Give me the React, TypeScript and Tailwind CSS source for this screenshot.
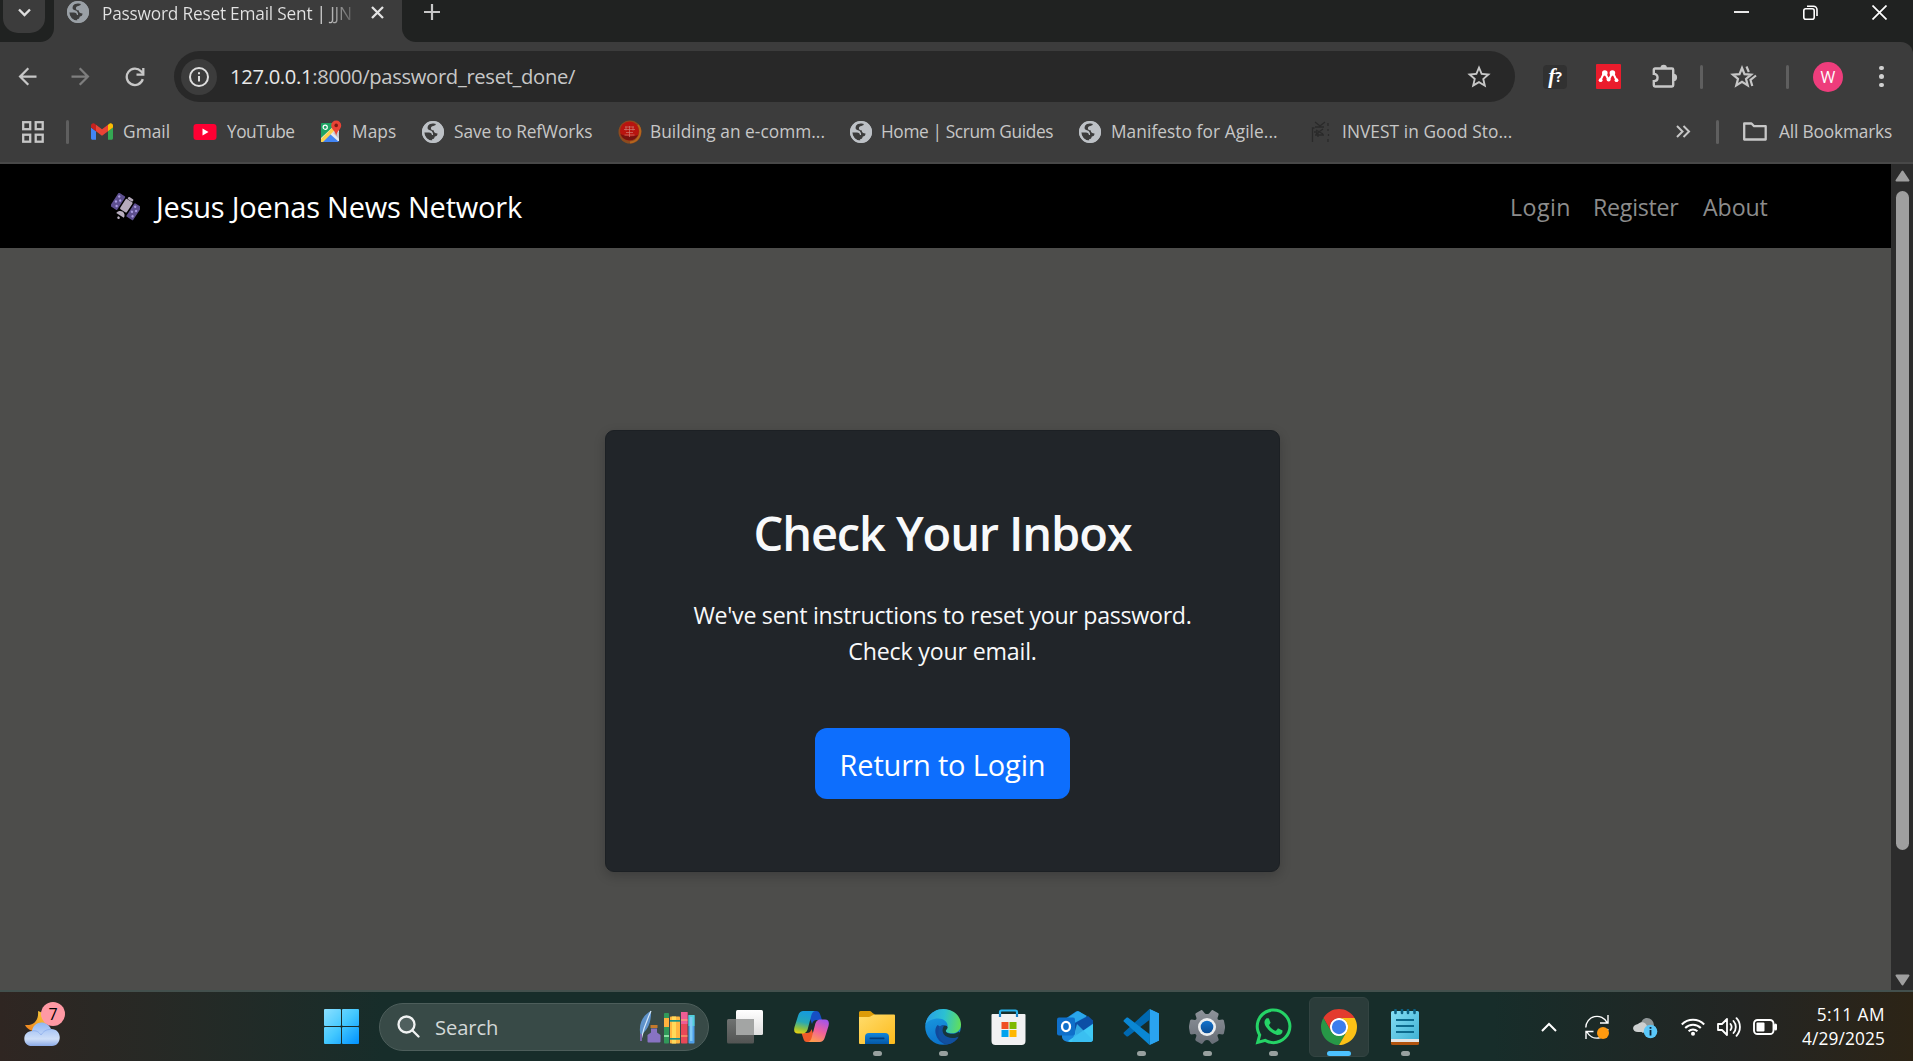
import React from 'react';
import { MdStarOutline, MdArrowBack, MdArrowForward } from 'react-icons/md';
import { FaWhatsapp } from 'react-icons/fa';

type IconProps = { className?: string };

const GmailIcon = () => (
  <svg className="h-[17px] w-[22px]" viewBox="52 42 88 66">
    <path fill="#4285f4" d="M58 108h14V74L52 59v43c0 3.32 2.69 6 6 6" />
    <path fill="#34a853" d="M120 108h14c3.32 0 6-2.69 6-6V59l-20 15" />
    <path fill="#fbbc04" d="M120 48v26l20-15v-8c0-7.42-8.47-11.65-14.4-7.2" />
    <path fill="#ea4335" d="M72 74V48l24 18 24-18v26L96 92" />
    <path fill="#c5221f" d="M52 51v8l20 15V48l-5.6-4.2c-5.94-4.45-14.4-.22-14.4 7.2" />
  </svg>
);

const YouTubeIcon = () => (
  <svg className="h-4 w-6" viewBox="0 0 24 16">
    <rect x="0.5" width="23" height="16" rx="3" fill="#ff0033" />
    <path d="M9.5 4.6v6.8l6-3.4z" fill="#fff" />
  </svg>
);

const MapsIcon = () => (
  <svg className="h-[23px] w-[22px]" viewBox="0 0 22 23">
    <path d="M2 3h11v11L1 22V4a1 1 0 0 1 1-1z" fill="#1ea362" />
    <path d="M1 18 15 5l4 4v12H1z" fill="#e8eaed" />
    <path d="M2 22l8-8 9 8z" fill="#4285f4" />
    <path d="M1 19 14 6l2 3L3 22H1z" fill="#fbd14b" />
    <path d="M13 13l6 6v-7l-3-2z" fill="#c6c9cf" />
    <circle cx="5.2" cy="7.2" r="2.1" fill="none" stroke="#fff" strokeWidth="1.2" />
    <path d="M16.2 0.5a5 5 0 0 0-5 5c0 4 4.2 5 5 10.5.8-5.500 5-6.500 5-10.500a5 5 0 0 0-5-5z" fill="#ea4335" />
    <circle cx="16.200" cy="5.400" r="1.800" fill="#7d1c14" />
  </svg>
);

const RedBadgeIcon = () => (
  <svg className="size-6" viewBox="0 0 24 24">
    <circle cx="12" cy="12" r="11.500" fill="#8c4a1e" />
    <path d="M20 5a11 11 0 0 1-8 17.500" fill="none" stroke="#b5651d" strokeWidth="2" />
    <circle cx="11.500" cy="11" r="9.500" fill="#b8140f" />
    <path d="M2.500 14a9.500 9.500 0 0 0 17.500 1c-4 2-12 2-17.500-1z" fill="#75130f" />
    <path d="M7 7h9M6 9.500h11M8 12.500h7M6.500 15h10M11.500 6v11M8 6.500v4M15 6.500v4" stroke="#cf7a70" strokeWidth="1" opacity="0.700" fill="none" />
  </svg>
);

const InvestIcon = () => (
  <svg className="h-[22px] w-[20px]" viewBox="0 0 20 22" fill="none" stroke="#2a2a2a" strokeWidth="1.300">
    <path d="M1.500 21V7h2M4 1l5 4 5-4M4 6h9M5 9l7 4M12 8l-7 5M4 14h9M7 11v5M17 2v3M17 8v2M17.500 13v2M17 18v3M3 11h3" />
  </svg>
);

const StarCollection = () => (
  <svg className="h-[27px] w-[30px]" viewBox="0 0 30 27" fill="none" stroke="#c7c7c7" strokeWidth="2.200" strokeLinejoin="miter">
    <path d="M13 5l2.500 6.200 6.600.500-5.100 4.200 1.700 6.500L13 18.800l-5.700 3.600L9 15.900l-5.100-4.200 6.600-.5z" />
    <path d="M17.500 3.500l2.300 5.500M27 12.500l-5.500 4.500 1.800 6" />
  </svg>
);

const PuzzleIcon = () => (
  <svg className="h-[27px] w-[27px]" viewBox="0 0 27 27">
    <path d="M4 6.500h17a1.200 1.200 0 0 1 1.200 1.200v15.600a1.200 1.200 0 0 1-1.200 1.200H4a1.200 1.200 0 0 1-1.200-1.200v-4.200c5 0 5-7.300 0-7.300V7.700A1.200 1.200 0 0 1 4 6.500z" fill="none" stroke="#c7c7c7" strokeWidth="2.400" />
    <path d="M9.500 6a3.200 3.200 0 0 1 6.400 0zM22.500 11.800a3.600 3.600 0 0 1 0 7.200z" fill="#c7c7c7" />
  </svg>
);

const MendeleyIcon = () => (
  <svg className="size-[25px]" viewBox="0 0 25 25">
    <rect width="25" height="25" rx="1" fill="#ea1c2c" />
    <circle cx="8.800" cy="9" r="2.800" fill="#fff" />
    <circle cx="16.400" cy="9" r="2.800" fill="#fff" />
    <path d="M4.600 16.200 7.500 10M12.600 16 9.500 10M12.600 16l3.200-6M20.500 16.200 17.500 10" fill="none" stroke="#fff" strokeWidth="2" />
    <circle cx="4.600" cy="16.200" r="1.900" fill="#fff" />
    <circle cx="12.600" cy="15.600" r="2" fill="#fff" />
    <circle cx="20.500" cy="16.200" r="1.900" fill="#fff" />
  </svg>
);

const SatelliteIcon = () => (
  <svg className="size-[29px]" viewBox="0 0 29 29">
    <g transform="rotate(33 14.500 14)">
      <rect x="1" y="5.500" width="8" height="16" rx="1" fill="#5d4f8f" />
      <rect x="20" y="5.500" width="8" height="16" rx="1" fill="#5d4f8f" />
      <g fill="#a99be0">
        <circle cx="3.500" cy="8.500" r="1.200" /><circle cx="6.500" cy="11.500" r="1.200" /><circle cx="3.500" cy="14.500" r="1.200" /><circle cx="6.500" cy="18" r="1.200" />
        <circle cx="22.500" cy="8.500" r="1.200" /><circle cx="25.500" cy="11.500" r="1.200" /><circle cx="22.500" cy="14.500" r="1.200" /><circle cx="25.500" cy="18" r="1.200" />
      </g>
      <rect x="10.500" y="6.500" width="8" height="12" rx="1" fill="#b5aabb" />
      <rect x="11.500" y="3.500" width="6" height="2.500" rx="1" fill="#b5aabb" />
      <path d="M10 24a4.500 4.500 0 0 1 9 0z" fill="#b9afbf" />
      <circle cx="14.500" cy="26.800" r="1.300" fill="#b9afbf" />
    </g>
  </svg>
);

const WeatherIcon = () => (
  <svg className="h-[44px] w-[38px]" viewBox="0 0 38 44">
    <defs>
      <linearGradient id="moon" x1="0" y1="1" x2="1" y2="0"><stop offset="0" stopColor="#ee7c1b" /><stop offset="1" stopColor="#f7cf3c" /></linearGradient>
      <linearGradient id="cloud" x1="0" y1="0" x2="0" y2="1"><stop offset="0" stopColor="#8fb5f3" /><stop offset="0.700" stopColor="#cfdff8" /><stop offset="1" stopColor="#8aa9e6" /></linearGradient>
    </defs>
    <path d="M14 8c8 2 12 14 4 19-6 3-14 1-17-5 9 1 14-5 13-14z" fill="url(#moon)" />
    <path d="M8 28C9 18 23 16 27 26c12 0 11 17 1 17H8C-2.500 43-2 28 8 28z" fill="url(#cloud)" />
    <path d="M8 28c4-1 7 1 9 4 2-3 5-6 10-5.500" fill="none" stroke="#7ea4ea" strokeWidth="1" opacity="0.600" />
  </svg>
);

const WindowsIcon = () => (
  <svg className="size-[35px]" viewBox="0 0 35 35">
    <defs><linearGradient id="win" gradientUnits="userSpaceOnUse" x1="0" y1="0" x2="35" y2="35"><stop offset="0" stopColor="#8be0ff" /><stop offset="0.500" stopColor="#43c8ff" /><stop offset="1" stopColor="#0091ff" /></linearGradient></defs>
    <g fill="url(#win)">
      <rect width="17" height="17" rx="1" /><rect x="18" width="17" height="17" rx="1" />
      <rect y="18" width="17" height="17" rx="1" /><rect x="18" y="18" width="17" height="17" rx="1" />
    </g>
  </svg>
);

const QuillBooks = () => (
  <svg className="h-[34px] w-[56px]" viewBox="0 0 56 34">
    <path d="M12 1C4 5-1 14 1.500 25c7-4 11-13 10.500-24z" fill="#5f93cb" />
    <path d="M12 1C9 8 5 15 2 30" stroke="#d6e8f8" strokeWidth="1.200" fill="none" />
    <path d="M2 24v7" stroke="#7b68ae" strokeWidth="2" />
    <rect x="11.500" y="15" width="7" height="3" fill="#c47a2c" />
    <path d="M12 18.500h6v4l3.500 2.500v6.500a1 1 0 0 1-1 1h-11a1 1 0 0 1-1-1V25l3.500-2.500z" fill="#8873c2" />
    <rect x="25" y="3" width="5" height="30.500" rx="0.800" fill="#31995a" /><rect x="25" y="8" width="5" height="9" fill="#ffb23e" /><rect x="25" y="25" width="5" height="2" fill="#8be0a4" />
    <rect x="31" y="6.500" width="10" height="27" rx="0.800" fill="#ffb53f" /><rect x="33" y="6.500" width="4" height="27" fill="#ffd95a" /><rect x="31" y="10" width="10" height="1.700" fill="#17908a" /><rect x="31" y="28" width="10" height="1.700" fill="#17908a" />
    <rect x="42" y="2" width="6.500" height="31.500" rx="0.800" fill="#e74858" /><rect x="42" y="2" width="6.500" height="12" fill="#ed5d95" /><rect x="42" y="9.500" width="6.500" height="1" fill="#ffbe6e" /><rect x="42" y="25.500" width="6.500" height="1" fill="#ffbe6e" />
    <rect x="49.500" y="5" width="6" height="28.500" rx="0.800" fill="#4f9fe8" /><rect x="49.500" y="5" width="6" height="11" fill="#52cfdb" /><rect x="51" y="7" width="2.500" height="24" fill="#7fc9f5" />
  </svg>
);

const TaskViewIcon = () => (
  <svg className="size-[36px]" viewBox="0 0 36 36">
    <defs><linearGradient id="tv" x1="0" y1="0" x2="0" y2="1"><stop offset="0" stopColor="#fff" /><stop offset="1" stopColor="#dedede" /></linearGradient><linearGradient id="tv2" x1="0" y1="0" x2="0" y2="1"><stop offset="0" stopColor="#6f7271" /><stop offset="1" stopColor="#525453" /></linearGradient></defs>
    <rect x="0" y="10" width="27" height="24.500" rx="1.500" fill="url(#tv2)" />
    <rect x="9" y="1" width="27" height="25" rx="1.500" fill="url(#tv)" />
    <rect x="9" y="10" width="18" height="16" fill="#a3a5a4" />
  </svg>
);

const CopilotIcon = () => (
  <svg className="h-[31px] w-[35px]" viewBox="0 0 35 31">
    <defs>
      <linearGradient id="cpA" x1="0.300" y1="0" x2="0.100" y2="1"><stop offset="0" stopColor="#169bdc" /><stop offset="0.450" stopColor="#27a8b5" /><stop offset="0.750" stopColor="#8fc13f" /><stop offset="1" stopColor="#f3d40d" /></linearGradient>
      <linearGradient id="cpB" x1="0.700" y1="0" x2="0.300" y2="1"><stop offset="0" stopColor="#a455e8" /><stop offset="0.500" stopColor="#f0609c" /><stop offset="1" stopColor="#ff9d4e" /></linearGradient>
    </defs>
    <path d="M13 0h9c2 0 3.500 1 4.200 3.500L28 9h-5c-3 0-4 1-5 4z" fill="#164fc4" />
    <path d="M22 31h-9c-2 0-3-1-3.700-3.500L7.500 22h5c3 0 4-1 5-4z" fill="#ef5a2a" />
    <path d="M10 0h11c-2 .5-3 2-3.700 4.500L14 17c-1 4-2.500 5.500-6 5.500H4C.5 22.500-.5 20 .5 16L4 5c1.200-4 3-5 6-5z" fill="url(#cpA)" />
    <path d="M25 31H14c2-.5 3-2 3.700-4.500L21 14c1-4 2.500-5.500 6-5.500h4c3.500 0 4.500 2.500 3.500 6.500L31 26c-1.200 4-3 5-6 5z" fill="url(#cpB)" />
  </svg>
);

const ExplorerIcon = () => (
  <svg className="size-[36px]" viewBox="0 0 36 36">
    <defs><linearGradient id="fold" x1="0" y1="0" x2="1" y2="1"><stop offset="0" stopColor="#ffdc6c" /><stop offset="1" stopColor="#fdbb1c" /></linearGradient><linearGradient id="fold2" x1="0" y1="0" x2="0" y2="1"><stop offset="0" stopColor="#1285da" /><stop offset="1" stopColor="#0458a8" /></linearGradient></defs>
    <path d="M0 3.500A1.500 1.500 0 0 1 1.500 2H11c1.500 0 2.500 3 4.500 3v4H0z" fill="#dc9b08" />
    <path d="M0 8h10c2 0 3.500-2.500 5.500-2.500H35a1 1 0 0 1 1 1V34a1 1 0 0 1-1 1H1a1 1 0 0 1-1-1z" fill="url(#fold)" />
    <path d="M6 35V28a4 4 0 0 1 4-4h16a4 4 0 0 1 4 4v7z" fill="url(#fold2)" />
    <rect x="10.500" y="28.500" width="15" height="1.700" rx="0.800" fill="#043e7c" />
  </svg>
);

const EdgeIcon = () => (
  <svg className="size-[36px]" viewBox="0 0 36 36">
    <defs>
      <linearGradient id="eg1" x1="0" y1="0.500" x2="1" y2="0.600"><stop offset="0" stopColor="#2a9fe4" /><stop offset="0.500" stopColor="#2bc0d3" /><stop offset="1" stopColor="#62df58" /></linearGradient>
      <linearGradient id="eg2" x1="0.300" y1="0" x2="0.600" y2="1"><stop offset="0" stopColor="#1b9de2" /><stop offset="1" stopColor="#0a6fc9" /></linearGradient>
    </defs>
    <circle cx="18" cy="18" r="17.800" fill="url(#eg2)" />
    <path d="M.5 15.500C2 6 9.500 0 18.500 0 28 0 36 7 36 15.500c0 5.500-4 8.800-9 8.800-3.500 0-6.200-1-6.200-2.500 0-1.200 1.800-1.800 1.800-5 0-4-4-7.300-9.300-7.300C7.500 9.500 2.500 12 .5 15.500z" fill="url(#eg1)" />
    <path d="M12.500 16c-2 2-2.500 5-2 8 1.200 6.500 6 11 12 11.500 5-1 9-4 11.500-8-5 3-12 3-17-1-3-2.500-4-6-2-9z" fill="#12489a" />
    <path d="M20.800 22c0 1.500 2.500 2.700 6.200 2.700 2.800 0 5-.8 6.700-2.300l3 3-3 3.500-1-.7C27 31 20 30 17 26c-2.500-3.500-1.500-7.500 2-9.500 2.500-.5 4 1 3.500 2.500-.3 1.200-1.700 1.700-1.700 3z" fill="#172d2a" opacity="0.900" />
    <path d="M14.800 17.500c2-1.500 4-1.800 5-1.300-2.500 2-3 6-1 9 3 4 10 5 15 2.300-2 3.500-6 6.500-10 7.500-6 0-11-6-10.500-12 .1-2 .5-4 1.500-5.500z" fill="#11509f" />
  </svg>
);

const StoreIcon = () => (
  <svg className="size-[36px]" viewBox="0 0 36 36">
    <path d="M9 8V3a1.500 1.500 0 0 1 1.500-1.500h14A1.500 1.500 0 0 1 26 3v5" fill="none" stroke="#29b3ee" strokeWidth="2.200" />
    <path d="M1.500 5h32a1 1 0 0 1 1 1v26a4 4 0 0 1-4 4h-26a4 4 0 0 1-4-4V6a1 1 0 0 1 1-1z" fill="#f1f1f2" />
    <path d="M9 5v3M26 5v3" stroke="#1b82c9" strokeWidth="2.200" />
    <rect x="10.500" y="13" width="7" height="7" fill="#f04e23" /><rect x="18.500" y="13" width="7" height="7" fill="#7eb900" />
    <rect x="10.500" y="21" width="7" height="7" fill="#00a3ee" /><rect x="18.500" y="21" width="7" height="7" fill="#ffb800" />
  </svg>
);

const OutlookIcon = () => (
  <svg className="h-[31px] w-[36px]" viewBox="0 0 36 31">
    <path d="M5 10 19 .5a3 3 0 0 1 3 0L36 10v18a3 3 0 0 1-3 3H13c-4 0-8-2-8-5z" fill="#1b86dc" />
    <path d="M9 8 20 .5a3 3 0 0 1 2.500.2L30 5 14 14z" fill="#2aa6ea" />
    <path d="M14 14 31 5l5 4.500v3L20 24z" fill="#0c4fa6" />
    <path d="M11 30 36 13v15a3 3 0 0 1-3 3H13z" fill="#3fc9f5" />
    <path d="M20 13l16 16-3 2H15z" fill="#39bdf0" opacity="0.800" />
    <rect y="6.500" width="18" height="18" rx="2" fill="#0f6fca" />
    <ellipse cx="9" cy="15.500" rx="4" ry="4.600" fill="none" stroke="#fff" strokeWidth="2.300" />
  </svg>
);

const VSCodeIcon = () => (
  <svg className="size-[36px]" viewBox="0 0 36 36">
    <path d="M26.500 0 36 4.500v27L26.500 36z" fill="#2aa3f0" />
    <path d="M26.500 0 1 23.200a1.200 1.200 0 0 0 0 1.800l2.400 2.200c.5.500 1.200.5 1.800.1L27 10.500z" fill="#0068b0" />
    <path d="M26.500 36 1 12.800a1.200 1.200 0 0 1 0-1.800l2.400-2.200c.5-.5 1.200-.5 1.800-.1L27 25.500z" fill="#0a87d4" />
    <path d="M26.500 0 36 4.500v27L26.500 36c.6-.2 1-.8 1-1.500v-33c0-.7-.4-1.300-1-1.500z" fill="#2aa3f0" />
  </svg>
);

const GearIcon = () => (
  <svg className="size-[36px]" viewBox="0 0 36 36">
    <defs><linearGradient id="gear" gradientUnits="userSpaceOnUse" x1="0" y1="0" x2="0" y2="36"><stop offset="0" stopColor="#8f949b" /><stop offset="1" stopColor="#666c75" /></linearGradient><linearGradient id="gearc" x1="0" y1="0" x2="0" y2="1"><stop offset="0" stopColor="#1473cc" /><stop offset="1" stopColor="#0b4c94" /></linearGradient></defs>
    <path fill="url(#gear)" d="M12 1.200 7.200 4c-.8.500-1 1.200-.7 2l1 3c.2 1-.6 2.200-1.800 2l-3-.4c-.8 0-1.300.3-1.600 1L0 17v2l1 5.400c.3.700.8 1 1.600 1l3-.4c1.200-.2 2 1 1.800 2l-1 3c-.3.800 0 1.500.7 2l4.900 2.800c.6.300 1.300.1 1.700-.5l2-2.500c1.200-1.200 3.400-1.200 4.600 0l2 2.500c.4.600 1.100.8 1.700.5l4.800-2.800c.8-.5 1-1.200.7-2l-1-3c-.2-1 .6-2.200 1.800-2l3 .4c.8 0 1.300-.3 1.600-1L36 19v-2l-1.100-5.400c-.3-.7-.8-1-1.600-1l-3 .4c-1.200.2-2-1-1.800-2l1-3c.3-.8.100-1.500-.7-2L24 1.200c-.6-.3-1.300-.1-1.700.5l-2 2.500c-1.200 1.200-3.400 1.200-4.600 0l-2-2.500c-.4-.6-1.100-.8-1.700-.5z" />
    <circle cx="18" cy="18" r="9" fill="#eceef0" />
    <circle cx="18" cy="18" r="6.300" fill="url(#gearc)" />
  </svg>
);

const ChromeIcon = () => (
  <svg className="size-[36px]" viewBox="0 0 48 48">
    <circle cx="24" cy="24" r="12.500" fill="#fff" />
    <path fill="#e33b2e" d="M24 12h20.780A24 24 0 0 0 3.215 12.003L13.608 30A12 12 0 0 1 24 12z" />
    <path fill="#279847" d="M13.608 30.003 3.218 12.006A24 24 0 0 0 24.003 48l10.392-18A12 12 0 0 1 13.608 30.003z" />
    <path fill="#fbc116" d="M34.391 30.003 24 48A24 24 0 0 0 44.780 12.003H24a12 12 0 0 1 10.391 18z" />
    <circle cx="24" cy="24" r="9.500" fill="#3b7ded" />
  </svg>
);

const NotepadIcon = () => (
  <svg className="h-[36px] w-[28px]" viewBox="0 0 28 36">
    <defs><linearGradient id="np" x1="0" y1="0" x2="1" y2="1"><stop offset="0" stopColor="#86dff5" /><stop offset="1" stopColor="#3fb2d4" /></linearGradient></defs>
    <rect y="28" width="28" height="8" rx="1.500" fill="#b1540f" />
    <rect y="27" width="28" height="6" fill="#e4e4e4" />
    <path d="M0 3.500A1.500 1.500 0 0 1 1.500 2h25A1.500 1.500 0 0 1 28 3.500V30H0z" fill="url(#np)" />
    <path d="M4.500 1v3M11 1v3M17 1v3M23.500 1v3" stroke="#0c5f80" strokeWidth="2.600" strokeLinecap="round" />
    <path d="M5 11h18M5 17h18M5 23h18" stroke="#0b6a8d" strokeWidth="1.800" />
  </svg>
);

function Label({ className, children }: { className?: string; children: React.ReactNode }) {
  return <span className={`whitespace-pre text-[17.3px] leading-6 text-[#c7c7c7] ${className ?? ''}`}>{children}</span>;
}

const Globe = ({ className }: IconProps) => (
  <svg className={`size-[22px] shrink-0 ${className ?? 'text-[#bdc1c6]'}`} viewBox="0 0 22 22">
    <circle cx="11" cy="11" r="11" fill="currentColor" />
    <path d="M14 2.600c-.3 1.400-1 2.200-2.600 2.300-1.700.1-2.500 1-2.500 2.300 0 1.600 1.100 2 2.700 2 .3 2.600 1.600 3.200 3.900 3.200 0 2-1 2.900-2.700 3.100-.3 1.700-1 2.500-2.600 2.600v1.500c-4.600 0-8-3.800-8-8.200h4.700c2 0 3 .9 3 2.600h1.200c0-2.500-.8-4.300-3.200-4.800-1.700-.4-2.500-1.200-2.300-3 .2-2 2-3.900 5.400-3.900 1.200 0 2.200.1 3 .3z" fill="#3c3c3c" />
    <circle cx="11" cy="11" r="9.900" fill="none" stroke="currentColor" strokeWidth="2.200" />
  </svg>
);

function TabStrip() {
  return (
    <div className="flex h-[42px] bg-[#202221]">
      <div className="flex h-[42px] w-[54px] items-end">
        <div className="relative h-[42px] w-full overflow-hidden bg-[#3c3c3c]">
          <div className="h-[42px] w-full rounded-br-[14px] bg-[#202221] pl-[3px]">
            <div className="flex h-[33px] w-[42px] items-center justify-center rounded-b-[15px] bg-[#3c3c3c]">
              <svg className="mb-2 h-[9px] w-[13px]" viewBox="0 0 13 9" fill="none" stroke="#dedede" strokeWidth="2.400"><path d="M1 1.500l5.500 5.500L12 1.500" /></svg>
            </div>
          </div>
        </div>
      </div>
      <div className="flex w-[348px] items-start bg-[#3c3c3c] pl-[13px]">
        <Globe className="mt-px text-[#9aa0a6]" />
        <Label className="ml-[13px] mt-[2px] w-[250px] overflow-hidden bg-linear-to-r from-[#e3e3e3] from-88% to-[#3c3c3c] to-104% bg-clip-text tracking-[-0.215px] text-transparent">Password Reset Email Sent | JJN</Label>
        <svg className="ml-[19px] mt-[6px] size-[13px]" viewBox="0 0 13 13" stroke="#e3e3e3" strokeWidth="2.300"><path d="M1 1l11 11M12 1L1 12" /></svg>
      </div>
      <div className="w-[20px] bg-[#3c3c3c]"><div className="h-full rounded-bl-[14px] bg-[#202221]" /></div>
      <svg className="ml-[2px] mt-1 size-4" viewBox="0 0 16 16" stroke="#c7c7c7" strokeWidth="2.200"><path d="M8 0v16M0 8h16" /></svg>
      <div className="ml-auto flex h-6 items-center gap-[54px] pr-[26px]">
        <svg className="size-[15px]" viewBox="0 0 15 15" stroke="#fff" strokeWidth="1.800"><path d="M0 7h15" /></svg>
        <svg className="size-[15px]" viewBox="0 0 15 15" fill="none" stroke="#fff" strokeWidth="1.600"><rect x="0.800" y="3.800" width="10.400" height="10.400" rx="2" /><path d="M4 1.200h6.500a3.500 3.500 0 0 1 3.500 3.500V11" /></svg>
        <svg className="size-[15px]" viewBox="0 0 15 15" stroke="#fff" strokeWidth="1.700"><path d="M.5.5l14 14M14.500.5l-14 14" /></svg>
      </div>
    </div>
  );
}

function Toolbar() {
  return (
    <div className="flex h-[69px] items-center rounded-tr-[12px] bg-[#3c3c3c] pl-[14px]">
      <MdArrowBack className="size-[27px] text-[#c7c7c7]" />
      <MdArrowForward className="ml-[26px] size-[27px] text-[#7e7e7e]" />
      <svg className="ml-[31px] size-5" viewBox="0 0 20 20" fill="none" stroke="#c7c7c7" strokeWidth="2.300"><path d="M17.800 12.200A8.200 8.200 0 1 1 16 4.300l2 2.200" /><path d="M11.500 7.700h6.800V1" /></svg>
      <div className="ml-[29px] flex h-[51px] w-[1341px] items-center rounded-full bg-[#282828] pl-[7px] pr-[22px]">
        <div className="flex size-9 items-center justify-center rounded-full bg-[#3c3c3c]">
          <svg className="size-5" viewBox="0 0 20 20" fill="none" stroke="#dedede" strokeWidth="2"><circle cx="10" cy="10" r="9" /><path d="M10 9v5.500M10 5.200v2" /></svg>
        </div>
        <span className="ml-[13px] text-[20.2px] leading-none tracking-[-0.320px] text-[#c7c7c7]"><span className="text-[#e8e8e8]">127.0.0.1</span>:8000/password_reset_done/</span>
        <MdStarOutline className="ml-auto size-[28px] text-[#c7c7c7]" />
      </div>
      <div className="ml-[28px] flex size-6 items-center justify-center rounded-[4px] bg-[#313131] font-['Liberation_Serif'] text-[21px] font-bold italic leading-none text-white">f<span className="font-['Open_Sans'] text-[14px] not-italic">?</span></div>
      <div className="ml-[29px]"><MendeleyIcon /></div>
      <div className="-mt-[3px] ml-[30px]"><PuzzleIcon /></div>
      <div className="ml-[22px] h-6 w-[3px] rounded-full bg-[#5f5f5f]" />
      <div className="ml-[26px]"><StarCollection /></div>
      <div className="ml-[27px] h-6 w-[3px] rounded-full bg-[#5f5f5f]" />
      <div className="ml-[24px] flex size-[30px] items-center justify-center rounded-full bg-[#ee3d7c] text-[16px] leading-none text-white">W</div>
      <div className="ml-[36px] flex flex-col gap-1">
        {[0, 1, 2].map((i) => <div key={i} className="size-[4.500px] rounded-full bg-[#d0d0d0]" />)}
      </div>
    </div>
  );
}

function Bookmarks() {
  return (
    <div className="flex h-[53px] items-center border-b-2 border-[#484848] bg-[#3c3c3c] pb-[10px] pl-[22px]">
      <svg className="size-[22px]" viewBox="0 0 22 22" fill="none" stroke="#c7c7c7" strokeWidth="2.300"><rect x="1.200" y="1.200" width="7" height="7" /><rect x="13.700" y="1.200" width="7" height="7" /><rect x="1.200" y="13.700" width="7" height="7" /><rect x="13.700" y="13.700" width="7" height="7" /></svg>
      <div className="ml-[22px] h-6 w-[3px] rounded-full bg-[#5f5f5f]" />
      <div className="ml-[22px]"><GmailIcon /></div>
      <Label className="ml-[10px] w-[46px] tracking-[0.068px]">Gmail</Label>
      <div className="ml-[24px]"><YouTubeIcon /></div>
      <Label className="ml-[10px] w-[68px] tracking-[-0.508px]">YouTube</Label>
      <div className="ml-[25px]"><MapsIcon /></div>
      <Label className="ml-[10px] w-[44px] tracking-[0.094px]">Maps</Label>
      <Globe className="ml-[26px] text-[#bdc1c6]" />
      <Label className="ml-[10px] w-[138px] tracking-[-0.100px]">Save to RefWorks</Label>
      <div className="ml-[26px]"><RedBadgeIcon /></div>
      <Label className="ml-[8px] w-[175px] tracking-[0.040px]">Building an e-comm...</Label>
      <Globe className="ml-[25px] text-[#bdc1c6]" />
      <Label className="ml-[9px] w-[172px] tracking-[-0.373px]">Home | Scrum Guides</Label>
      <Globe className="ml-[26px] text-[#bdc1c6]" />
      <Label className="ml-[10px] w-[166px] tracking-[0.072px]">Manifesto for Agile...</Label>
      <div className="ml-[34px]"><InvestIcon /></div>
      <Label className="ml-[11px] w-[170px] tracking-[0.075px]">INVEST in Good Sto...</Label>
      <svg className="ml-auto h-[13px] w-[15px]" viewBox="0 0 15 13" fill="none" stroke="#c7c7c7" strokeWidth="2"><path d="M1 1l5.500 5.500L1 12M7.500 1l5.500 5.500L7.500 12" /></svg>
      <div className="ml-[25px] h-6 w-[3px] rounded-full bg-[#5f5f5f]" />
      <svg className="ml-[24px] h-[19px] w-6" viewBox="0 0 24 19" fill="none" stroke="#c7c7c7" strokeWidth="2.300" strokeLinejoin="round"><path d="M1.200 1.500h7.300l2.600 2.700h11.600v13.300H1.200z" /></svg>
      <Label className="ml-[12px] mr-[21px] w-[113px] tracking-[-0.160px]">All Bookmarks</Label>
    </div>
  );
}

function Page() {
  return (
    <div className="flex h-[826px]">
      <div className="flex w-[1891px] flex-col bg-[#4d4d4b]">
        <nav className="flex h-[84px] shrink-0 items-center bg-black pl-[111px] pr-[123px] text-[#8c8c8c]">
          <div className="mt-[2px]"><SatelliteIcon /></div>
          <span className="ml-[16px] mt-px text-[29px] leading-none tracking-[-0.210px] text-white">Jesus Joenas News Network</span>
          <div className="ml-auto mt-[4px] flex gap-[23px] text-[23.2px] leading-none">
            <span className="w-[60px] tracking-[0.451px]">Login</span>
            <span className="w-[88px] tracking-[-0.259px]">Register</span>
            <span className="-ml-[1px] w-[65px] tracking-[-0.104px]">About</span>
          </div>
        </nav>
        <div className="flex flex-1 items-start pl-[605px] pt-[182px]">
          <main className="flex h-[442px] w-[675px] flex-col items-center rounded-[9px] border border-[#1c2024] bg-[#212529] text-[#f8f9fa] shadow-[0_4px_12px_rgba(0,0,0,0.2)]">
            <h1 className="mt-[72px] text-[47px] font-semibold leading-[60px] tracking-[-1.133px]">Check Your Inbox</h1>
            <p className="mt-[34px] text-center text-[23.2px] leading-9 tracking-[-0.285px]">We've sent instructions to reset your password.<br /><span className="tracking-[-0.180px]">Check your email.</span></p>
            <button className="mt-[59px] h-[71px] w-[255px] rounded-[12px] bg-[#0d6efd] pt-px text-[29px] leading-none tracking-[-0.150px] text-white">Return to Login</button>
          </main>
        </div>
      </div>
      <div className="flex w-[22px] flex-col items-center bg-[#2c2c2c] pb-[4px] pt-[6px]">
        <svg className="h-[12px] w-[15px]" viewBox="0 0 15 12"><path d="M7.500 1.500 13.500 10.500h-12z" fill="#9f9f9f" stroke="#9f9f9f" strokeWidth="2" strokeLinejoin="round" /></svg>
        <div className="mt-[9px] h-[659px] w-[13px] rounded-full bg-[#9f9f9f]" />
        <svg className="mt-auto h-[12px] w-[15px]" viewBox="0 0 15 12"><path d="M7.500 10.500 13.500 1.500h-12z" fill="#9f9f9f" stroke="#9f9f9f" strokeWidth="2" strokeLinejoin="round" /></svg>
      </div>
    </div>
  );
}

const apps: { icon: React.ReactNode; state: 'none' | 'open' | 'active' }[] = [
  { icon: <TaskViewIcon />, state: 'none' },
  { icon: <CopilotIcon />, state: 'none' },
  { icon: <ExplorerIcon />, state: 'open' },
  { icon: <EdgeIcon />, state: 'open' },
  { icon: <StoreIcon />, state: 'none' },
  { icon: <OutlookIcon />, state: 'none' },
  { icon: <VSCodeIcon />, state: 'open' },
  { icon: <GearIcon />, state: 'open' },
  { icon: <FaWhatsapp className="size-[41px] text-[#25d366]" />, state: 'open' },
  { icon: <ChromeIcon />, state: 'active' },
  { icon: <NotepadIcon />, state: 'open' },
];

function Taskbar() {
  return (
    <div className="flex h-[71px] items-center border-t-2 border-[#43504d] bg-linear-to-r from-[#2f2622] via-[#172d2a] via-20% to-[#172d2a] to-75%">
      <div className="flex h-full w-full items-center bg-linear-to-r from-transparent from-78% via-[#232523] via-91% to-[#2c2416]">
        <div className="relative -mt-[3px] ml-[24px] w-[42px]">
          <WeatherIcon />
          <div className="absolute -top-[1px] left-[17px] flex size-6 items-center justify-center rounded-full bg-[#ff99a4] text-[16px] leading-none text-black">7</div>
        </div>
        <div className="ml-[258px]"><WindowsIcon /></div>
        <div className="ml-[20px] flex h-12 w-[330px] items-center rounded-full border border-[#4d5e5b] bg-[#384a47] pl-[17px] pr-[13px]">
          <svg className="size-[23px]" viewBox="0 0 23 23" fill="none" stroke="#f0f2f2" strokeWidth="2.300" strokeLinecap="round"><circle cx="9.500" cy="9.500" r="8" fill="#50605e" /><path d="M15.500 15.500l6 6" /></svg>
          <span className="ml-[15px] mt-px text-[20.2px] leading-none tracking-[-0.109px] text-[#d3d8d7]">Search</span>
          <div className="ml-auto"><QuillBooks /></div>
        </div>
        <div className="ml-[3px] flex h-full">
          {apps.map((a, i) => (
            <div key={i} className="flex h-full w-[66px] items-center justify-center">
              <div className={a.state === 'active' ? 'flex h-[60px] w-[60px] flex-col items-center rounded-[6px] border border-[#334442] bg-[#2b3c3a] pt-[11px]' : 'flex h-[60px] w-[60px] flex-col items-center pt-[12px]'}>
                <div className="flex h-9 items-center">{a.icon}</div>
                {a.state === 'active' && <div className="mt-[6px] h-[5px] w-6 rounded-full bg-[#4cc2ff]" />}
                {a.state === 'open' && <div className="mt-[6px] h-[5px] w-[9px] rounded-full bg-[#98a09f]" />}
              </div>
            </div>
          ))}
        </div>
        <svg className="ml-[103px] h-[10px] w-4" viewBox="0 0 16 10" fill="none" stroke="#fff" strokeWidth="2"><path d="M1 9l7-7 7 7" /></svg>
        <svg className="ml-[28px] size-6" viewBox="0 0 24 24" fill="none" stroke="#fff" strokeWidth="1.400">
          <path d="M.8 12.500A11.200 11.200 0 0 1 22 7.500M23 0v8h-8M23 14A11.200 11.200 0 0 1 2 17M1 24v-7.500h7.500" />
          <circle cx="18" cy="18" r="6" fill="#ff9a0f" stroke="none" />
        </svg>
        <svg className="ml-[24px] mt-[3px] size-6 overflow-visible" viewBox="0 0 24 24">
          <path d="M8 9c0-10 13-9 13 1 3 1 3 6 0 7H9z" fill="#8f9697" />
          <path d="M5 8c3-3 8-2 9 2l4 6H5c-6 0-7-7 0-8z" fill="#cdd0d0" />
          <circle cx="17.500" cy="15.500" r="6.800" fill="#5ac8fa" />
          <path d="M17.500 14v5.500M17.500 11v1.800" stroke="#123" strokeWidth="1.800" />
        </svg>
        <svg className="ml-[24px] h-[18px] w-6" viewBox="0 0 24 18" fill="none" stroke="#fff" strokeWidth="2"><path d="M.8 6.500a15.800 15.800 0 0 1 22.400 0M4.200 10a11 11 0 0 1 15.600 0M7.600 13.200a6.300 6.300 0 0 1 8.800 0" /><circle cx="12" cy="15.800" r="2" fill="#fff" stroke="none" /></svg>
        <svg className="ml-[12px] h-[20px] w-6" viewBox="0 0 24 20" fill="none" stroke="#fff" strokeWidth="1.800" strokeLinejoin="round" strokeLinecap="round"><path d="M1 7h4l5-5v16l-5-5H1z" /><path d="M13.500 7a5 5 0 0 1 0 6M16.500 4a9 9 0 0 1 0 12M19.500 1.200a13 13 0 0 1 0 17.600" /></svg>
        <svg className="ml-[12px] h-[16px] w-6" viewBox="0 0 24 16" fill="none" stroke="#fff" strokeWidth="1.900"><rect x="1" y="1" width="19.500" height="14" rx="3.500" /><rect x="3.500" y="3.500" width="8" height="9" rx="1" fill="#fff" stroke="none" /><path d="M22.500 6v4" strokeWidth="3" strokeLinecap="round" /></svg>
        <div className="ml-auto mr-[28px] flex flex-col items-end text-[17.3px] leading-6 text-white">
          <span className="tracking-[0.450px]">5:11 AM</span>
          <span className="tracking-[0.130px]">4/29/2025</span>
        </div>
      </div>
    </div>
  );
}

export default function App() {
  return (
    <div className="h-[1061px] w-[1913px] overflow-hidden bg-[#202221] font-['Open_Sans',sans-serif]">
      <TabStrip />
      <Toolbar />
      <Bookmarks />
      <Page />
      <Taskbar />
    </div>
  );
}
